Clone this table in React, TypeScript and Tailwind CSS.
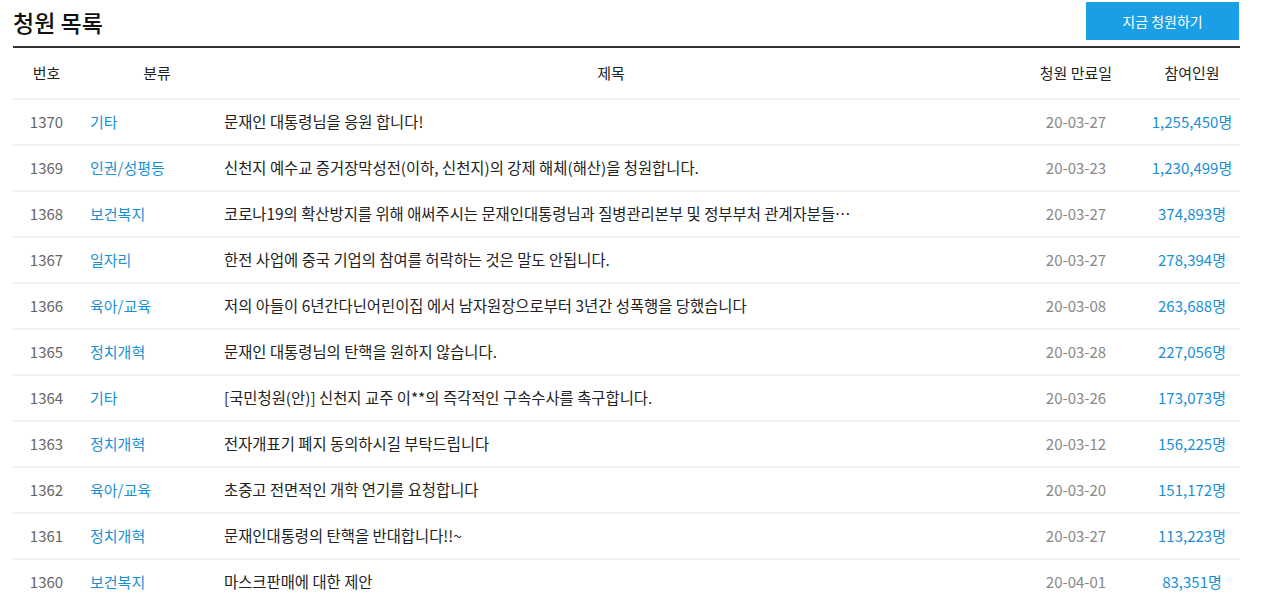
import React from 'react';

const rows = [
  { no: 1370, cat: '기타', title: '문재인 대통령님을 응원 합니다!', date: '20-03-27', count: '1,255,450명' },
  { no: 1369, cat: '인권/성평등', title: '신천지 예수교 증거장막성전(이하, 신천지)의 강제 해체(해산)을 청원합니다.', date: '20-03-23', count: '1,230,499명' },
  { no: 1368, cat: '보건복지', title: '코로나19의 확산방지를 위해 애써주시는 문재인대통령님과 질병관리본부 및 정부부처 관계자분들께 감사의 마음을 전합니다', date: '20-03-27', count: '374,893명' },
  { no: 1367, cat: '일자리', title: '한전 사업에 중국 기업의 참여를 허락하는 것은 말도 안됩니다.', date: '20-03-27', count: '278,394명' },
  { no: 1366, cat: '육아/교육', title: '저의 아들이 6년간다닌어린이집 에서 남자원장으로부터 3년간 성폭행을 당했습니다', date: '20-03-08', count: '263,688명' },
  { no: 1365, cat: '정치개혁', title: '문재인 대통령님의 탄핵을 원하지 않습니다.', date: '20-03-28', count: '227,056명' },
  { no: 1364, cat: '기타', title: '[국민청원(안)] 신천지 교주 이**의 즉각적인 구속수사를 촉구합니다.', date: '20-03-26', count: '173,073명' },
  { no: 1363, cat: '정치개혁', title: '전자개표기 폐지 동의하시길 부탁드립니다', date: '20-03-12', count: '156,225명' },
  { no: 1362, cat: '육아/교육', title: '초중고 전면적인 개학 연기를 요청합니다', date: '20-03-20', count: '151,172명' },
  { no: 1361, cat: '정치개혁', title: '문재인대통령의 탄핵을 반대합니다!!~', date: '20-03-27', count: '113,223명' },
  { no: 1360, cat: '보건복지', title: '마스크판매에 대한 제안', date: '20-04-01', count: '83,351명' },
];

const cols = 'grid grid-cols-[67px_134px_794px_136px_96px] items-center';

export default function App() {
  return (
    <div
      className="w-[1280px] bg-white text-[#222]"
      style={{ fontFamily: '"Noto Sans CJK KR", "Noto Sans", sans-serif' }}
    >
      <div className="ml-[13px] w-[1227px]">
        <div className="flex items-start justify-between pt-[2px] h-[48px] border-b-2 border-[#333]">
          <h1 className="pt-[4px] text-[23px] font-medium leading-[32px] text-[#111]">청원 목록</h1>
          <button className="mr-[1px] h-[38px] w-[153px] bg-[#1a9fe6] text-[14px] text-white">
            지금 청원하기
          </button>
        </div>

        <div className={`${cols} h-[52px] border-b-2 border-[#f2f2f2] text-[15px] text-[#222]`}>
          <div className="text-center">번호</div>
          <div className="pl-[20px] text-center">분류</div>
          <div className="text-center">제목</div>
          <div className="text-center">청원 만료일</div>
          <div className="text-center">참여인원</div>
        </div>

        {rows.map((r) => (
          <div key={r.no} className={`${cols} h-[46px] border-b-2 border-[#f2f2f2] text-[15px]`}>
            <div className="text-center text-[#666]">{r.no}</div>
            <div className="pl-[10px] text-[#1a8fd4]">{r.cat}</div>
            <div className="pl-[10px]">
              <div className="max-w-[630px] truncate text-[15.4px] text-[#222]">{r.title}</div>
            </div>
            <div className="text-center text-[#888]">{r.date}</div>
            <div className="text-center text-[#1a8fd4]">{r.count}</div>
          </div>
        ))}
      </div>
    </div>
  );
}
